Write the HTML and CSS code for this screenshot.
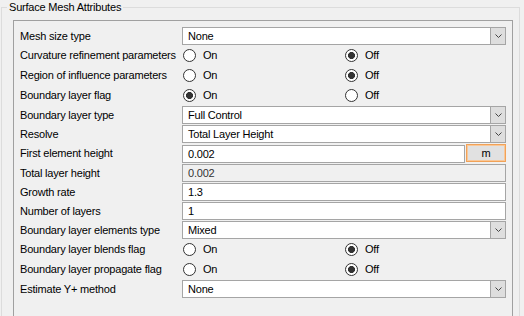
FILE: index.html
```html
<!DOCTYPE html>
<html lang="en">
<head>
    <meta charset="UTF-8">
    <title>Surface Mesh Attributes</title>
    <link rel="stylesheet" href="styles.css">
</head>
<body>

    <fieldset class="group">
        <legend>Surface Mesh Attributes</legend>

        <div class="panel">
            <div class="form">
                <!-- mesh size -->
                <label class="lbl">Mesh size type</label>
                <div class="select"><span class="val">None</span><span class="drop"><svg width="7" height="4" viewBox="0 0 7 4"><polyline points="0.5,0.5 3.5,3.5 6.5,0.5" fill="none" stroke="#444" stroke-width="1"/></svg></span></div>

                <label class="lbl">Curvature refinement parameters</label>
                <div class="radios">
                    <span class="opt"><span class="radio"></span>On</span>
                    <span class="opt"><span class="radio checked"></span>Off</span>
                </div>

                <label class="lbl">Region of influence parameters</label>
                <div class="radios">
                    <span class="opt"><span class="radio"></span>On</span>
                    <span class="opt"><span class="radio checked"></span>Off</span>
                </div>

                <!-- boundary layer -->
                <label class="lbl">Boundary layer flag</label>
                <div class="radios">
                    <span class="opt"><span class="radio checked"></span>On</span>
                    <span class="opt"><span class="radio"></span>Off</span>
                </div>

                <label class="lbl">Boundary layer type</label>
                <div class="select"><span class="val">Full Control</span><span class="drop"><svg width="7" height="4" viewBox="0 0 7 4"><polyline points="0.5,0.5 3.5,3.5 6.5,0.5" fill="none" stroke="#444" stroke-width="1"/></svg></span></div>

                <label class="lbl">Resolve</label>
                <div class="select"><span class="val">Total Layer Height</span><span class="drop"><svg width="7" height="4" viewBox="0 0 7 4"><polyline points="0.5,0.5 3.5,3.5 6.5,0.5" fill="none" stroke="#444" stroke-width="1"/></svg></span></div>

                <label class="lbl">First element height</label>
                <div class="unit-field">
                    <div class="input">0.002</div>
                    <button class="unit-btn">m</button>
                </div>

                <label class="lbl">Total layer height</label>
                <div class="input disabled">0.002</div>

                <label class="lbl">Growth rate</label>
                <div class="input">1.3</div>

                <label class="lbl">Number of layers</label>
                <div class="input">1</div>

                <label class="lbl">Boundary layer elements type</label>
                <div class="select"><span class="val">Mixed</span><span class="drop"><svg width="7" height="4" viewBox="0 0 7 4"><polyline points="0.5,0.5 3.5,3.5 6.5,0.5" fill="none" stroke="#444" stroke-width="1"/></svg></span></div>

                <label class="lbl">Boundary layer blends flag</label>
                <div class="radios">
                    <span class="opt"><span class="radio"></span>On</span>
                    <span class="opt"><span class="radio checked"></span>Off</span>
                </div>

                <label class="lbl">Boundary layer propagate flag</label>
                <div class="radios">
                    <span class="opt"><span class="radio"></span>On</span>
                    <span class="opt"><span class="radio checked"></span>Off</span>
                </div>

                <label class="lbl">Estimate Y+ method</label>
                <div class="select"><span class="val">None</span><span class="drop"><svg width="7" height="4" viewBox="0 0 7 4"><polyline points="0.5,0.5 3.5,3.5 6.5,0.5" fill="none" stroke="#444" stroke-width="1"/></svg></span></div>
            </div>
        </div>
    </fieldset>

</body>
</html>
```

FILE: styles.css
```css
html, body {
    overflow: hidden;
}

body {
    margin: 0;
    padding: 0;
    background-color: #f0f0f0;
    color: #000;
    font-family: "Liberation Sans", Arial, sans-serif;
    font-size: 11px;
    letter-spacing: -0.2px;
}

/* Group box */
.group {
    box-sizing: border-box;
    width: 519px;
    margin: 0 0 0 1px;
    padding: 5px 6px 0 5px;
    border: 1px solid #dcdcdc;
    border-bottom: none;
    min-width: 0;
}

.group legend {
    padding: 0 2px;
    line-height: 15px;
    font-size: 11px;
}

.panel {
    box-sizing: border-box;
    width: 500px;
    height: 296px;
    margin-left: 6px;
    padding: 5px 6px 0 6px;
    border: 1px solid #a0a0a0;
    border-bottom: none;
}

/* Form grid */
.form {
    display: grid;
    grid-template-columns: 162px 324px;
    grid-template-rows: 19px 20px 20px 20px 19px 19px 20px 19px 19px 19px 19px 20px 20px 19px;
}

.lbl {
    align-self: center;
    white-space: nowrap;
}

.select, .input, .unit-field {
    align-self: start;
    margin-top: 1px;
    height: 18px;
    box-sizing: border-box;
}

.select, .input {
    display: flex;
    align-items: center;
    border: 1px solid #a5a5a5;
    background: #fff;
    padding-left: 5px;
}

.select .val {
    flex: 1;
}

.drop {
    width: 15px;
    height: 16px;
    box-sizing: border-box;
    display: flex;
    align-items: center;
    justify-content: center;
    background: #dedede;
    border-left: 1px solid #a5a5a5;
}

.input.disabled {
    background: #f0f0f0;
    color: #333;
}

.unit-field {
    display: flex;
    gap: 1px;
}

.unit-field .input {
    flex: 1;
}

.unit-btn {
    width: 40px;
    height: 18px;
    box-sizing: border-box;
    border: 1px solid #f2a257;
    box-shadow: inset 0 0 0 1px #f8c89a;
    background: #e1e1e1;
    font-family: inherit;
    font-size: 11px;
    color: #000;
    padding: 0;
}

/* Radio buttons */
.radios {
    display: flex;
    align-self: center;
}

.opt {
    width: 162px;
    display: flex;
    align-items: center;
    gap: 7px;
    padding-left: 1px;
}

.radio {
    width: 13px;
    height: 13px;
    box-sizing: border-box;
    border: 1px solid #333;
    border-radius: 50%;
    background: #fff;
}

.radio.checked {
    background: radial-gradient(circle, #333 0 3.2px, #fff 3.8px);
}
```
